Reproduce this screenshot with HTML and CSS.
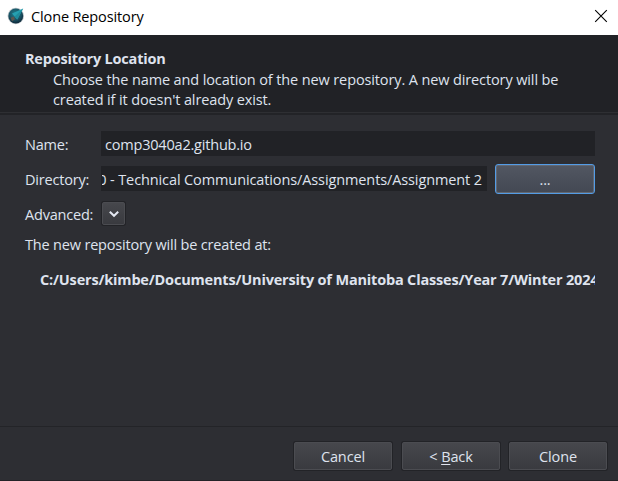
FILE: index.html
```html
<!DOCTYPE html>
<html lang="en">
<head>
<meta charset="utf-8">
<title>Clone Repository</title>
<link rel="stylesheet" href="styles.css">
</head>
<body>
<div class="window">
  <div class="titlebar">
    <svg class="app-icon" width="18" height="18" viewBox="0 0 18 18">
      <defs>
        <radialGradient id="orb" cx="0.45" cy="0.35" r="0.65">
          <stop offset="0" stop-color="#1e7d8c"/>
          <stop offset="0.6" stop-color="#1a5566"/>
          <stop offset="1" stop-color="#10293a"/>
        </radialGradient>
      </defs>
      <circle cx="8.8" cy="9" r="8.2" fill="#b9c3c8"/>
      <circle cx="8.8" cy="9" r="7.4" fill="url(#orb)"/>
      <path d="M16.2 1.6 5 6.6 7.6 9.4 10.2 12.6Z" fill="#26a0b0"/>
      <path d="M16.2 1.6 7.6 9.4 10.2 12.6Z" fill="#1f8c9c"/>
      <path d="M3.6 10.8 7 9.6 7.8 12.4 5 14.2Z" fill="#5f574f"/>
    </svg>
    <span class="title">Clone Repository</span>
    <svg class="close" width="14" height="14" viewBox="0 0 14 14"><path d="M1.2 1.2 12.8 12.8M12.8 1.2 1.2 12.8" stroke="#000" stroke-width="1.1" fill="none"/></svg>
  </div>
  <header class="header">
    <div class="heading">Repository Location</div>
    <div class="sub">Choose the name and location of the new repository. A new directory will be<br>created if it doesn't already exist.</div>
  </header>
  <main class="form">
    <div class="row"><label>Name:</label><div class="input">comp3040a2.github.io</div></div>
    <div class="row"><label>Directory:</label><div class="input dir"><span>0 - Technical Communications/Assignments/Assignment 2</span></div><button class="btn browse">...</button></div>
    <div class="row"><label>Advanced:</label><button class="toggle"><svg width="12" height="8" viewBox="0 0 12 8"><path d="M1.8 1.8 6 5.8 10.2 1.8" fill="none" stroke="#e4e8f2" stroke-width="2"/></svg></button></div>
    <div class="note">The new repository will be created at:</div>
    <div class="path">C:/Users/kimbe/Documents/University of Manitoba Classes/Year 7/Winter 2024</div>
  </main>
  <footer class="footer">
    <button class="btn">Cancel</button>
    <button class="btn">&lt; <u>B</u>ack</button>
    <button class="btn last">Clone</button>
  </footer>
</div>
</body>
</html>
```
FILE: styles.css
```css
* { box-sizing: border-box; }
body { margin: 0; background: #2d2e33; font: 14.5px/20px "Open Sans", "Noto Sans", sans-serif; color: #dfe3ee; letter-spacing: -0.2px; white-space: nowrap; }
.window { width: 618px; height: 481px; display: flex; flex-direction: column; overflow: hidden; border-bottom: 1px solid #232227; }
.titlebar { height: 35px; flex: none; background: #fff; color: #000; display: flex; align-items: center; padding: 0 10px 3px 7px; }
.title { padding-top: 2px; letter-spacing: -0.13px; }
.app-icon { margin-right: 6px; }
.close { margin-left: auto; }
.header { height: 80px; flex: none; background: #212226; padding: 14px 25px 0; border-bottom: 2px solid #222327; box-shadow: inset 0 -1px #2e2f33; }
.heading { font-weight: 700; }
.sub { padding-left: 28px; margin-top: 1px; letter-spacing: -0.12px; }
.form { padding: 16px 23px 0 25px; flex: 1; display: flex; flex-direction: column; }
.row { display: flex; align-items: center; height: 25px; margin-bottom: 10px; }
.row label { width: 76px; flex: none; padding-top: 2px; }
.input { flex: 1; height: 25px; background: #212226; padding: 4px 4px 0; overflow: hidden; }
.input.dir { display: flex; justify-content: flex-end; flex: none; width: 386px; padding-right: 5px; margin-right: 8px; letter-spacing: -0.11px; border-left: 1px solid #212226; }
.input.dir span { overflow: hidden; direction: rtl; unicode-bidi: plaintext; }
.input.dir { padding-left: 0; }
.input.dir span { direction: ltr; flex: none; }
.btn { width: 98px; height: 28px; flex: none; padding: 2px 0 0; font: inherit; letter-spacing: -0.1px; color: inherit; border: 1px solid #4b4c51; border-radius: 2px; background: linear-gradient(#46474c, #393a3f); box-shadow: 0 0 0 1px #222327; }
.btn.browse { width: 100px; height: 30px; border: 1px solid #539ce6; box-shadow: inset 0 0 0 1px #626873; border-radius: 3px; background: linear-gradient(#525762, #434853); }
.toggle { width: 23px; height: 23px; margin-left: 1px; padding: 0; display: grid; place-items: center; border: 1px solid #4b4c51; border-radius: 2px; background: linear-gradient(#46474c, #393a3f); box-shadow: 0 0 0 1px #222327; }
.note { margin-top: -1px; letter-spacing: -0.18px; }
.path { font-weight: 700; margin-top: 15px; margin-left: 15px; overflow: hidden; letter-spacing: -0.18px; }
.footer { height: 54px; flex: none; border-top: 1px solid #232428; display: flex; justify-content: flex-end; gap: 10px; padding: 15px 11px 0 0; }
.last { margin-left: -1px; }
u { text-underline-offset: 2px; }
```
